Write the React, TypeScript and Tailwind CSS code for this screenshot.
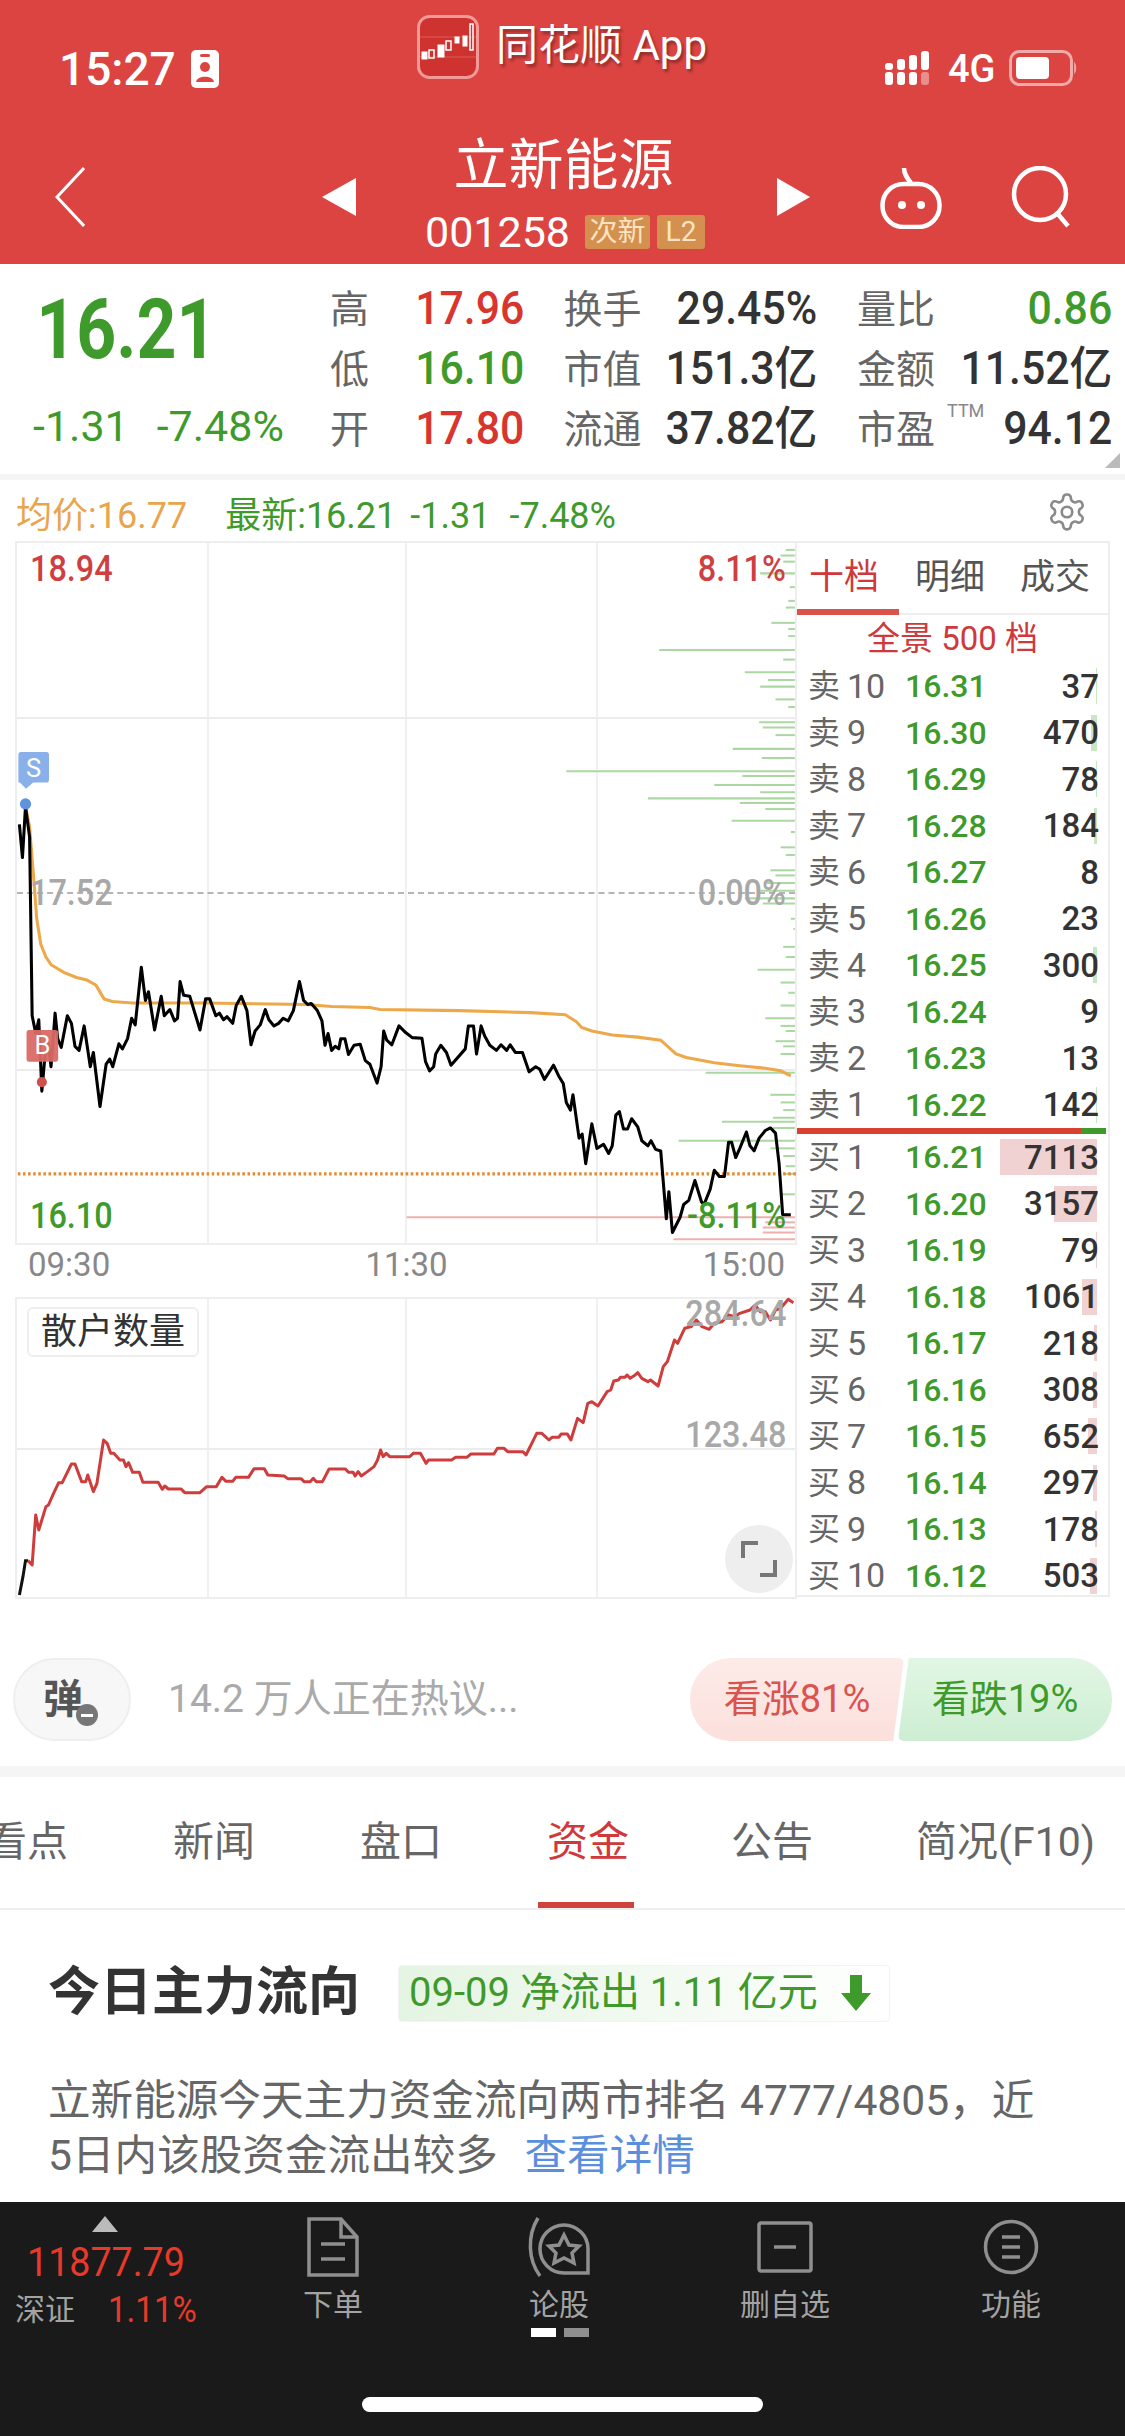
const NUM = "font-['Roboto','Noto_Sans_CJK_SC',sans-serif]";
const GREEN = "text-[#3f9a2c]";
const RED = "text-[#d8352f]";
const NARROW_L = "inline-block origin-left scale-x-[0.9]";
const NARROW_R = "inline-block origin-right scale-x-[0.9]";

const quoteCols = [
  {
    width: "w-[194px]",
    rows: [
      ["高", "17.96", RED],
      ["低", "16.10", GREEN],
      ["开", "17.80", RED],
    ],
  },
  {
    width: "w-[254px]",
    rows: [
      ["换手", "29.45%", "text-[#333]"],
      ["市值", "151.3亿", "text-[#333]"],
      ["流通", "37.82亿", "text-[#333]"],
    ],
  },
  {
    width: "w-[255px]",
    rows: [
      ["量比", "0.86", GREEN],
      ["金额", "11.52亿", "text-[#333]"],
      ["市盈", "94.12", "text-[#333]"],
    ],
  },
];

const sells = [
  ["10", "16.31", "37", 1],
  ["9", "16.30", "470", 6],
  ["8", "16.29", "78", 1],
  ["7", "16.28", "184", 3],
  ["6", "16.27", "8", 0],
  ["5", "16.26", "23", 0],
  ["4", "16.25", "300", 4],
  ["3", "16.24", "9", 0],
  ["2", "16.23", "13", 0],
  ["1", "16.22", "142", 1],
] as const;

const buys = [
  ["1", "16.21", "7113", 97],
  ["2", "16.20", "3157", 43],
  ["3", "16.19", "79", 1],
  ["4", "16.18", "1061", 15],
  ["5", "16.17", "218", 3],
  ["6", "16.16", "308", 4],
  ["7", "16.15", "652", 9],
  ["8", "16.14", "297", 4],
  ["9", "16.13", "178", 2],
  ["10", "16.12", "503", 7],
] as const;

const priceLine =
  "38,675 44,740 50,640 58,700 63,1050 70,1085 76,1058 82,1198 88,1130 95,1105 100,1150 108,1045 113,1095 120,1112 132,1050 140,1065 147,1110 155,1118 165,1070 177,1150 183,1122 196,1228 208,1145 215,1135 221,1150 233,1105 240,1115 250,1095 258,1055 265,1068 277,955 285,1020 291,1003 303,1078 316,1012 322,1050 333,1038 342,1060 348,1055 353,983 360,1010 372,1012 392,1078 403,1017 411,1017 423,1050 430,1045 438,1058 445,1052 456,1065 463,1030 473,1012 484,1040 492,1107 500,1080 510,1068 520,1038 527,1058 537,1070 546,1065 555,1055 565,1060 575,1040 587,983 595,1020 603,1028 610,1026 622,1040 631,1060 637,1108 643,1085 650,1118 657,1110 664,1115 668,1095 676,1095 683,1126 694,1108 706,1106 716,1138 725,1145 739,1182 747,1150 752,1080 758,1098 768,1107 782,1070 795,1083 808,1093 827,1094 834,1140 842,1158 850,1150 854,1125 864,1108 875,1122 884,1147 912,1115 918,1070 928,1070 934,1125 943,1070 950,1090 960,1108 973,1118 982,1107 993,1118 1000,1107 1010,1122 1024,1122 1037,1160 1050,1150 1058,1155 1067,1175 1085,1147 1095,1168 1104,1183 1110,1220 1118,1235 1123,1205 1135,1290 1141,1282 1148,1340 1160,1262 1170,1310 1183,1302 1193,1320 1200,1305 1207,1245 1214,1238 1222,1272 1230,1272 1238,1252 1250,1268 1258,1295 1270,1305 1276,1295 1285,1312 1295,1315 1306,1448 1311,1395 1318,1475 1333,1445 1340,1420 1350,1412 1362,1373 1375,1415 1380,1420 1392,1390 1400,1353 1410,1365 1420,1365 1428,1298 1434,1298 1442,1328 1450,1310 1463,1278 1470,1305 1478,1315 1488,1290 1500,1275 1510,1270 1520,1280 1527,1340 1534,1440 1550,1440";

const avgLine =
  "50,640 58,680 66,780 72,860 80,910 90,935 100,950 125,965 150,975 170,980 188,990 204,1017 220,1022 260,1025 400,1025 600,1028 650,1032 725,1034 745,1038 900,1040 1040,1044 1108,1048 1130,1062 1140,1073 1160,1080 1200,1088 1250,1092 1295,1098 1325,1125 1345,1132 1400,1142 1450,1148 1500,1153 1530,1158 1550,1168";

const retailLine =
  "55,872 63,885 70,735 76,780 90,710 95,705 105,670 115,638 122,638 140,582 147,582 160,635 168,635 172,615 183,665 190,640 203,510 210,520 217,550 223,550 235,570 242,570 247,590 252,578 260,607 273,607 280,637 310,637 318,658 323,648 330,657 355,657 362,668 392,668 405,650 424,650 435,622 443,634 456,634 462,622 487,622 498,596 518,596 525,615 557,618 564,626 590,626 596,635 608,635 614,625 620,635 632,635 645,597 677,597 683,607 692,607 696,618 702,605 708,618 720,605 733,590 740,570 746,540 751,560 757,550 764,560 803,560 810,550 824,550 835,580 840,570 885,570 893,562 915,562 923,552 968,552 975,535 988,535 995,545 1025,545 1031,555 1052,490 1062,490 1076,510 1082,502 1095,502 1100,492 1112,492 1119,510 1132,445 1143,458 1152,400 1160,395 1172,408 1190,365 1197,360 1203,333 1212,330 1216,322 1225,322 1229,315 1235,325 1245,315 1250,308 1258,325 1270,335 1275,330 1290,348 1300,290 1308,275 1322,210 1328,220 1342,175 1355,170 1365,150 1376,170 1390,178 1400,160 1415,155 1428,135 1440,140 1450,130 1470,120 1480,105 1490,125 1500,125 1510,150 1520,120 1530,115 1545,88 1555,98";

const greenVolume = [
  [137, 1540], [148, 1530], [160, 1535], [183, 1490], [210, 1548], [237, 1545], [250, 1540], [280, 1512],
  [292, 1545], [306, 1545], [333, 1292], [352, 1535], [377, 1460], [392, 1505], [405, 1490], [430, 1520],
  [445, 1545], [475, 1488], [485, 1495], [500, 1520], [527, 1436], [545, 1493], [571, 1110], [580, 1455],
  [598, 1400], [612, 1490], [624, 1270], [633, 1450], [645, 1500], [668, 1434], [690, 1550], [720, 1530],
  [735, 1540], [765, 1510], [775, 1520], [790, 1500], [805, 1490], [820, 1460], [830, 1495], [860, 1550],
  [880, 1555], [915, 1535], [935, 1540], [960, 1485], [985, 1530], [1005, 1545], [1030, 1530], [1055, 1500],
  [1070, 1530], [1080, 1540], [1100, 1520], [1110, 1535], [1125, 1530], [1162, 1383], [1205, 1510], [1220, 1530],
  [1235, 1535], [1250, 1515], [1258, 1415], [1270, 1515], [1295, 1330], [1310, 1510], [1325, 1535], [1345, 1540],
  [1360, 1535], [1400, 1530],
];

const redVolume = [
  [1445, 797], [1455, 1500], [1465, 1495], [1475, 1495], [1488, 1320],
];

function GridLines({ mid }: { mid?: boolean }) {
  return (
    <>
      <div className="absolute top-0 bottom-0 left-[190px] w-[2px] bg-[#f0f0f0]" />
      <div className="absolute top-0 bottom-0 left-[388px] w-[2px] bg-[#f0f0f0]" />
      <div className="absolute top-0 bottom-0 left-[579px] w-[2px] bg-[#f0f0f0]" />
      {mid ? (
        <>
          <div className="absolute left-0 right-0 top-[174px] h-[2px] bg-[#ececec]" />
          <div className="absolute left-0 right-0 top-[526px] h-[2px] bg-[#ececec]" />
        </>
      ) : (
        <div className="absolute left-0 right-0 top-[149px] h-[2px] bg-[#ececec]" />
      )}
    </>
  );
}

function PriceChart() {
  return (
    <div className="relative h-[704px] border-2 border-[#eee]">
      <GridLines mid />
      <div className="absolute left-0 right-0 top-[349px] border-t-2 border-dashed border-[#b5b5b5]" />
      <svg className="absolute left-[-2px] top-[-2px]" width="783" height="704" viewBox="15 541 783 704">
        <g transform="translate(0 480) scale(0.5102)">
          {greenVolume.map(([y, x]) => (
            <line key={y} x1={x} x2="1558" y1={y} y2={y} stroke="#abd8a2" strokeWidth="4" />
          ))}
          {redVolume.map(([y, x]) => (
            <line key={y} x1={x} x2="1558" y1={y} y2={y} stroke="#eeb0ae" strokeWidth="4" />
          ))}
          <line x1="35" x2="1560" y1="1360" y2="1360" stroke="#e68a2e" strokeWidth="6" strokeDasharray="5 5" />
          <polyline points={avgLine} fill="none" stroke="#eda849" strokeWidth="6" />
          <polyline points={priceLine} fill="none" stroke="#000" strokeWidth="6" strokeLinejoin="round" />
          <circle cx="50" cy="635" r="11" fill="#5f93e0" />
          <circle cx="82" cy="1180" r="10" fill="#cf4f4c" />
          <path d="M36 538a5 5 0 0 1 5-5h50a5 5 0 0 1 5 5v50a5 5 0 0 1-5 5h-26l-14 12-12-12h-3z" fill="#8ab0ea" />
          <rect x="52" y="1078" width="62" height="62" rx="5" fill="#d96a66" fillOpacity="0.95" />
          <text x="66" y="582" fill="#fff" textAnchor="middle" fontSize="50" fontFamily="Roboto">S</text>
          <text x="83" y="1126" fill="#fff" textAnchor="middle" fontSize="50" fontFamily="Roboto">B</text>
        </g>
      </svg>
      <span className={`absolute left-[13px] top-[4px] text-[36px] font-medium leading-[44px] text-[#cf3f42] ${NARROW_L} ${NUM}`}>18.94</span>
      <span className={`absolute right-[9px] top-[4px] text-[36px] font-medium leading-[44px] text-[#cf3f42] ${NARROW_R} ${NUM}`}>8.11%</span>
      <span className={`absolute left-[13px] top-[328px] text-[36px] font-medium leading-[44px] text-[#a8a8a8] ${NARROW_L} ${NUM}`}>17.52</span>
      <span className={`absolute right-[9px] top-[328px] text-[36px] font-medium leading-[44px] text-[#a8a8a8] ${NARROW_R} ${NUM}`}>0.00%</span>
      <span className={`absolute left-[13px] top-[651px] text-[36px] font-medium leading-[44px] ${GREEN} ${NARROW_L} ${NUM}`}>16.10</span>
      <span className={`absolute right-[9px] top-[651px] text-[36px] font-medium leading-[44px] ${GREEN} ${NARROW_R} ${NUM}`}>-8.11%</span>
    </div>
  );
}

function RetailChart() {
  return (
    <div className="relative h-[302px] border-2 border-[#eee]">
      <GridLines />
      <svg className="absolute left-[-2px] top-[-2px]" width="783" height="302" viewBox="15 1297 783 302">
        <g transform="translate(0 1270) scale(0.5102 0.3333)">
          <polyline points="38,975 45,920 50,872 55,872" fill="none" stroke="#111" strokeWidth="3" vectorEffect="non-scaling-stroke" />
          <polyline points={retailLine} fill="none" stroke="#cf3c3c" strokeWidth="3" strokeLinejoin="round" vectorEffect="non-scaling-stroke" />
        </g>
      </svg>
      <div className="absolute left-[10px] top-[8px] flex h-[50px] w-[172px] items-center justify-center rounded-[6px] border-2 border-[#eee] bg-white text-[36px] text-[#333]">
        散户数量
      </div>
      <span className={`absolute right-[9px] top-[-7px] text-[36px] font-medium leading-[44px] text-[#a8a8a8] ${NARROW_R} ${NUM}`}>284.64</span>
      <span className={`absolute right-[9px] top-[114px] text-[36px] font-medium leading-[44px] text-[#a8a8a8] ${NARROW_R} ${NUM}`}>123.48</span>
      <div className="absolute right-[2px] top-[226px] flex size-[68px] items-center justify-center rounded-full bg-[#eeeeee]">
        <svg width="38" height="38" viewBox="0 0 38 38" fill="none" stroke="#777" strokeWidth="4">
          <path d="M18 3H3v15M20 35h15V20" />
        </svg>
      </div>
    </div>
  );
}

function BookRow({ side, level, price, vol, bar, color }: { side: string; level: string; price: string; vol: string; bar: number; color: string }) {
  return (
    <div className="relative flex h-[46.5px] items-center pl-[11px] pr-[9px]">
      <span className="w-[31px] text-[32px] text-[#666]">{side}</span>
      <span className="w-[66px] pl-[8px] text-[34px] text-[#666]">{level}</span>
      <span className={`text-[32px] font-medium ${GREEN}`}>{price}</span>
      {bar > 0 && (
        <div className={`absolute right-[11px] top-[5px] h-[36px] ${color}`} style={{ width: bar }} />
      )}
      <span className="relative ml-auto text-[33px] font-medium text-[#333]">{vol}</span>
    </div>
  );
}

function OrderBook() {
  return (
    <div className="h-[1056px] w-[313px] border-y-2 border-r-2 border-[#eee]">
      <div className="relative flex h-[72px] items-center border-b-2 border-[#eee] text-[35px] text-[#555]">
        <span className="w-[102px] pl-[12px] text-[#d0393b]">十档</span>
        <span className="ml-[16px]">明细</span>
        <span className="ml-[35px]">成交</span>
        <div className="absolute bottom-[-2px] left-0 h-[6px] w-[102px] bg-[#d9534a]" />
      </div>
      <div className="flex h-[48px] items-center justify-center text-[33px] text-[#d0393b]">全景 500 档</div>
      {sells.map(([level, price, vol, bar]) => (
        <BookRow key={level} side="卖" level={level} price={price} vol={vol} bar={bar} color="bg-[#c9e6c3]" />
      ))}
      <div className="flex h-[6px]">
        <div className="w-[284px] bg-[#d8402f]" />
        <div className="w-[25px] bg-[#3f9a2c]" />
      </div>
      {buys.map(([level, price, vol, bar]) => (
        <BookRow key={level} side="买" level={level} price={price} vol={vol} bar={bar} color="bg-[#f0d2d2]" />
      ))}
    </div>
  );
}

function SignalIcon() {
  return (
    <svg width="50" height="36" viewBox="0 0 50 36" fill="#fff">
      <rect x="1" y="22" width="8" height="13" rx="3" />
      <rect x="13" y="22" width="8" height="13" rx="3" />
      <rect x="25" y="22" width="8" height="13" rx="3" />
      <rect x="37" y="22" width="8" height="13" rx="3" fillOpacity="0.4" />
      <rect x="1" y="13" width="8" height="7" rx="3" />
      <rect x="13" y="9" width="8" height="11" rx="3" />
      <rect x="25" y="5" width="8" height="15" rx="3" />
      <rect x="37" y="1" width="8" height="19" rx="3" />
    </svg>
  );
}

function FooterItem({ label, icon }: { label: string; icon: React.ReactNode }) {
  return (
    <div className="flex w-[226px] flex-col items-center">
      <div className="flex h-[62px] items-center">{icon}</div>
      <span className="mt-[7px] text-[30px] leading-[40px] text-[#a3a3a3]">{label}</span>
    </div>
  );
}

export default function App() {
  return (
    <div className="relative h-[2436px] w-[1125px] overflow-hidden bg-white font-['Roboto','Noto_Sans_CJK_SC',sans-serif]">
      {/* red header */}
      <div className="h-[264px] bg-[#dc4441] text-white">
        <div className="flex h-[130px]">
          <div className="flex w-[417px] items-start gap-[15px] pl-[59px] pt-[46px]">
            <span className="text-[46px] font-medium leading-[46px]">15:27</span>
            <svg className="mt-[4px]" width="28" height="38" viewBox="0 0 28 38">
              <rect width="28" height="38" rx="5" fill="#fff" />
              <circle cx="14" cy="17" r="5" fill="#dc4441" />
              <path d="M5 32c1-7 17-7 18 0z" fill="#dc4441" />
              <rect x="9" y="4" width="10" height="3" rx="1.5" fill="#dc4441" />
            </svg>
          </div>
          <div className="flex w-[467px] items-start gap-[17px] pt-[15px]">
            <svg width="62" height="64" viewBox="0 0 62 64">
              <rect x="1.5" y="1.5" width="59" height="61" rx="11" fill="#cf3330" stroke="#f19a97" strokeWidth="3" />
              <path d="M3 22h56M3 42h56" stroke="#dc5a55" strokeWidth="1" />
              <g fill="#fff" stroke="#fff" strokeWidth="1">
                <rect x="5" y="37" width="5" height="7" />
                <rect x="21" y="30" width="6" height="12" />
                <rect x="38" y="22" width="4" height="6" />
                <rect x="46" y="21" width="4" height="10" />
              </g>
              <g fill="none" stroke="#fff" strokeWidth="1.5">
                <rect x="12" y="35" width="5" height="8" />
                <rect x="29" y="26" width="5" height="9" />
                <rect x="53" y="9" width="3" height="26" />
              </g>
            </svg>
            <span className="mt-[3px] text-[42px] leading-[56px] [text-shadow:2px_3px_3px_rgba(0,0,0,0.35)]">同花顺 App</span>
          </div>
          <div className="flex flex-1 items-start pt-[50px]">
            <SignalIcon />
            <span className="ml-[14px] text-[38px] font-medium leading-[38px]">4G</span>
            <svg className="ml-[14px]" width="68" height="36" viewBox="0 0 68 36">
              <rect x="1.5" y="1.5" width="61" height="33" rx="9" fill="none" stroke="#fff" strokeOpacity="0.55" strokeWidth="3" />
              <rect x="7" y="7" width="33" height="22" rx="4" fill="#fff" />
              <path d="M65 12c3 2 3 10 0 12z" fill="#fff" fillOpacity="0.5" />
            </svg>
          </div>
        </div>
        <div className="flex h-[134px] items-center pl-[55px]">
          <svg width="30" height="60" viewBox="0 0 30 60" fill="none" stroke="#fff" strokeWidth="3">
            <path d="M29 1 2 30l27 29" />
          </svg>
          <svg className="ml-[237px]" width="34" height="38" viewBox="0 0 34 38" fill="#fff">
            <path d="M34 0v38L0 19z" />
          </svg>
          <div className="flex h-[134px] w-[421px] flex-col items-center pt-[6px]">
            <span className="-ml-[6px] text-[55px] leading-[58px]">立新能源</span>
            <div className="-ml-[3px] mt-[21px] flex h-[34px] items-center">
              <span className="text-[43px] leading-[34px]">001258</span>
              <span className="ml-[15px] flex h-[34px] w-[65px] items-center justify-center rounded-[3px] bg-[#d4904f] text-[28px] text-[#fbe3c4]">次新</span>
              <span className="ml-[7px] flex h-[34px] w-[48px] items-center justify-center rounded-[3px] bg-[#d4904f] text-[28px] text-[#fbe3c4]">L2</span>
            </div>
          </div>
          <svg width="33" height="38" viewBox="0 0 33 38" fill="#fff">
            <path d="M0 0v38l33-19z" />
          </svg>
          <svg className="ml-[70px]" width="62" height="64" viewBox="0 0 62 64" fill="none" stroke="#fff" strokeWidth="4.5">
            <rect x="2.5" y="19" width="57" height="43" rx="21" />
            <path d="M24 3c0 6 3 10 7 15" />
            <circle cx="22" cy="40" r="4" fill="#fff" stroke="none" />
            <circle cx="41" cy="40" r="4" fill="#fff" stroke="none" />
          </svg>
          <svg className="ml-[68px]" width="64" height="62" viewBox="0 0 64 62" fill="none" stroke="#fff" strokeWidth="4.5">
            <circle cx="30" cy="28" r="26" />
            <path d="m47 47 11 13" />
          </svg>
        </div>
      </div>

      {/* quote panel */}
      <div className="relative flex h-[210px]">
        <div className="w-[330px] pl-[33px]">
          <div className={`origin-left scale-x-[0.83] pl-[4px] pt-[18px] text-[84px] font-bold leading-[96px] ${GREEN} ${NUM}`}>16.21</div>
          <div className={`mt-[23px] flex gap-[28px] text-[43px] leading-[50px] ${GREEN} ${NUM}`}>
            <span>-1.31</span>
            <span>-7.48%</span>
          </div>
        </div>
        <div className="flex gap-[39.5px] pt-[14px]">
          {quoteCols.map((col) => (
            <div key={col.rows[0][0]} className={col.width}>
              {col.rows.map(([label, value, color]) => (
                <div key={label} className="flex h-[60px] items-center justify-between">
                  <span className="pt-[4px] text-[39px] text-[#666]">{label}</span>
                  <span className={`inline-block origin-right scale-x-[0.93] text-[46px] font-medium ${color} ${NUM}`}>{value}</span>
                </div>
              ))}
            </div>
          ))}
        </div>
        <span className="absolute left-[947px] top-[137px] text-[18px] leading-[20px] text-[#888]">TTM</span>
        <div className="absolute bottom-[6px] right-[5px] size-0 border-b-[15px] border-l-[15px] border-b-[#bbb] border-l-transparent" />
      </div>
      <div className="h-[6px] bg-[#f5f5f5]" />

      {/* chart header */}
      <div className="flex h-[61px] items-center pl-[16px] pt-[10px] text-[36px]">
        <span className="text-[#e8a54e]">均价:16.77</span>
        <span className={`ml-[38px] ${GREEN}`}>最新:16.21</span>
        <span className={`ml-[14px] ${GREEN}`}>-1.31</span>
        <span className={`ml-[19px] ${GREEN}`}>-7.48%</span>
        <svg className="-mt-[8px] ml-auto mr-[36px]" width="44" height="42" viewBox="0 0 24 24" fill="none" stroke="#8a8a8a" strokeWidth="1.5" strokeLinejoin="round">
          <path d="M12.2 2h-.4a2 2 0 0 0-2 2v.2a2 2 0 0 1-1 1.7l-.4.3a2 2 0 0 1-2 0l-.2-.1a2 2 0 0 0-2.7.7l-.2.4a2 2 0 0 0 .7 2.7l.2.1a2 2 0 0 1 1 1.7v.5a2 2 0 0 1-1 1.7l-.2.1a2 2 0 0 0-.7 2.7l.2.4a2 2 0 0 0 2.7.7l.2-.1a2 2 0 0 1 2 0l.4.3a2 2 0 0 1 1 1.7v.2a2 2 0 0 0 2 2h.4a2 2 0 0 0 2-2v-.2a2 2 0 0 1 1-1.7l.4-.3a2 2 0 0 1 2 0l.2.1a2 2 0 0 0 2.7-.7l.2-.4a2 2 0 0 0-.7-2.7l-.2-.1a2 2 0 0 1-1-1.7v-.5a2 2 0 0 1 1-1.7l.2-.1a2 2 0 0 0 .7-2.7l-.2-.4a2 2 0 0 0-2.7-.7l-.2.1a2 2 0 0 1-2 0l-.4-.3a2 2 0 0 1-1-1.7V4a2 2 0 0 0-2-2z" />
          <circle cx="12" cy="12" r="3" />
        </svg>
      </div>

      {/* charts and order book */}
      <div className="flex">
        <div className="w-[797px] pl-[15px]">
          <PriceChart />
          <div className="flex h-[52px] items-center justify-between pb-[12px] pl-[13px] pr-[12px] text-[33px] text-[#888]">
            <span>09:30</span>
            <span>11:30</span>
            <span>15:00</span>
          </div>
          <RetailChart />
        </div>
        <OrderBook />
      </div>

      {/* danmaku + vote */}
      <div className="mt-[59px] flex h-[83px] items-stretch px-[13px]">
        <div className="relative flex w-[118px] items-center justify-center rounded-full border-2 border-[#eee] bg-[#f7f7f7]">
          <span className="-ml-[18px] text-[40px] font-bold text-[#555]">弹</span>
          <span className="absolute left-[61px] top-[44px] flex size-[22px] items-center justify-center rounded-full bg-[#777]">
            <span className="h-[3px] w-[12px] bg-white" />
          </span>
        </div>
        <span className="ml-[37px] self-center text-[39px] text-[#aaa]">14.2 万人正在热议...</span>
        <div className="relative ml-auto flex w-[422px]">
          <div className="flex w-[214px] items-center justify-center rounded-l-[41px] rounded-r-[6px] bg-gradient-to-b from-[#fdebe8] to-[#fbe0dc] text-[38px] text-[#d9534f] [clip-path:polygon(0_0,100%_0,95%_100%,0_100%)]">
            看涨81%
          </div>
          <div className={`-ml-[6px] flex w-[214px] items-center justify-center rounded-l-[6px] rounded-r-[41px] bg-gradient-to-b from-[#e2f6e4] to-[#cdeed2] text-[38px] ${GREEN} [clip-path:polygon(5%_0,100%_0,100%_100%,0_100%)]`}>
            看跌19%
          </div>
        </div>
      </div>
      <div className="mt-[25px] h-[11px] bg-[#f5f5f5]" />

      {/* tabs */}
      <div className="relative flex h-[133px] items-center gap-[105px] overflow-hidden border-b-2 border-[#eee] text-[41px] text-[#666]">
        <span className="-ml-[14px]">看点</span>
        <span>新闻</span>
        <span>盘口</span>
        <span className="text-[#d0393b]">资金</span>
        <span className="-ml-[3px]">公告</span>
        <span className="-ml-[2px]">简况(F10)</span>
        <div className="absolute bottom-0 left-[538px] h-[6px] w-[96px] bg-[#cf433c]" />
      </div>

      {/* money flow */}
      <div className="flex items-center pl-[48px] pt-[53px]">
        <h2 className="text-[52px] font-bold leading-[60px] text-[#333]">今日主力流向</h2>
        <div className={`ml-[38px] flex h-[57px] w-[492px] items-center rounded-[4px] border border-[#f3f3f3] bg-gradient-to-r from-[#e4f4e2] to-white pl-[10px] text-[40px] ${GREEN}`}>
          <span>09-09 净流出 1.11 亿元</span>
          <svg className="ml-[23px]" width="30" height="36" viewBox="0 0 30 36" fill="#3f9a2c">
            <path d="M9 0h12v18h9L15 36 0 18h9z" />
          </svg>
        </div>
      </div>
      <p className="px-[48px] pt-[50px] text-[42.6px] leading-[55px] text-[#666]">
        立新能源今天主力资金流向两市排名 4777/4805，近
        <br />
        5日内该股资金流出较多 <span className="ml-[16px] text-[#5a8fdd]">查看详情</span>
      </p>

      {/* bottom bar */}
      <div className="absolute bottom-0 left-0 right-0 h-[234px] bg-[#1a1a1a]">
        <div className="flex pt-[14px]">
          <div className="flex w-[220px] flex-col items-start pl-[15px]">
            <div className="ml-[77px] size-0 border-x-[13px] border-b-[16px] border-x-transparent border-b-[#bbb]" />
            <span className={`ml-[12px] mt-[8px] origin-left scale-x-[0.94] text-[40px] leading-[46px] text-[#e8392a] ${NUM}`}>11877.79</span>
            <div className="mt-[4px] flex items-center text-[30px] leading-[40px] text-[#a3a3a3]">
              <span>深证</span>
              <span className={`ml-[33px] origin-left scale-x-[0.92] text-[36px] text-[#e8392a] ${NUM}`}>1.11%</span>
            </div>
          </div>
          <FooterItem
            label="下单"
            icon={
              <svg width="52" height="60" viewBox="0 0 52 60" fill="none" stroke="#8f8f8f" strokeWidth="3.5">
                <path d="M2 2h32l16 18v38H2z" />
                <path d="M34 2v18h16M14 27h24M14 42h24" />
              </svg>
            }
          />
          <FooterItem
            label="论股"
            icon={
              <svg width="62" height="62" viewBox="0 0 62 62" fill="none" stroke="#8f8f8f" strokeWidth="3.5">
                <path d="M10 2C-1 20 0 44 12 60" />
                <path d="M60 33a24 24 0 1 0-24 24h24z" />
                <path d="m36 19 5 10 10 1-7 7 2 10-10-5-10 5 2-10-7-7 10-1z" />
              </svg>
            }
          />
          <FooterItem
            label="删自选"
            icon={
              <svg width="56" height="52" viewBox="0 0 56 52" fill="none" stroke="#8f8f8f" strokeWidth="3.5">
                <rect x="2" y="2" width="52" height="48" rx="2" />
                <path d="M17 26h22" />
              </svg>
            }
          />
          <FooterItem
            label="功能"
            icon={
              <svg width="56" height="56" viewBox="0 0 56 56" fill="none" stroke="#8f8f8f" strokeWidth="3.5">
                <circle cx="28" cy="28" r="25.5" />
                <path d="M19 18h18M19 28h18M19 38h18" />
              </svg>
            }
          />
        </div>
        <div className="absolute left-[531px] top-[126px] flex gap-[8px]">
          <div className="h-[9px] w-[25px] bg-white" />
          <div className="h-[9px] w-[25px] bg-[#8f8f8f]" />
        </div>
        <div className="absolute left-[362px] top-[195px] h-[15px] w-[401px] rounded-full bg-white" />
      </div>
    </div>
  );
}
